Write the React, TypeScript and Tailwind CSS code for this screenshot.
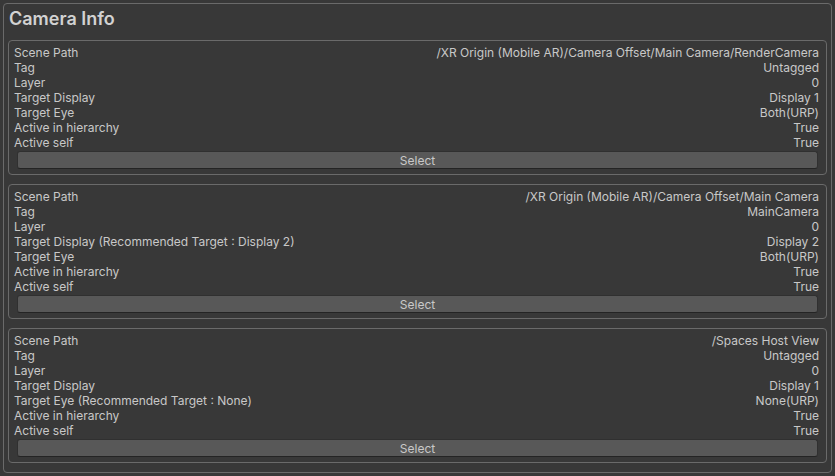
import React from "react";

type Row = [string, string];

const cameras: Row[][] = [
  [
    ["Scene Path", "/XR Origin (Mobile AR)/Camera Offset/Main Camera/RenderCamera"],
    ["Tag", "Untagged"],
    ["Layer", "0"],
    ["Target Display", "Display 1"],
    ["Target Eye", "Both(URP)"],
    ["Active in hierarchy", "True"],
    ["Active self", "True"],
  ],
  [
    ["Scene Path", "/XR Origin (Mobile AR)/Camera Offset/Main Camera"],
    ["Tag", "MainCamera"],
    ["Layer", "0"],
    ["Target Display (Recommended Target : Display 2)", "Display 2"],
    ["Target Eye", "Both(URP)"],
    ["Active in hierarchy", "True"],
    ["Active self", "True"],
  ],
  [
    ["Scene Path", "/Spaces Host View"],
    ["Tag", "Untagged"],
    ["Layer", "0"],
    ["Target Display", "Display 1"],
    ["Target Eye (Recommended Target : None)", "None(URP)"],
    ["Active in hierarchy", "True"],
    ["Active self", "True"],
  ],
];

function CameraCard({ rows }: { rows: Row[] }) {
  return (
    <div className="h-[135px] border border-[#6a6a6a] rounded-[4px] pl-[5px] pr-[7px] pt-[4px]">
      {rows.map(([label, value]) => (
        <div key={label} className="flex justify-between h-[15px] leading-[15px] text-[12px] text-[#c8c8c8]">
          <span>{label}</span>
          <span>{value}</span>
        </div>
      ))}
      <button className="block mt-[1px] ml-[3px] mr-[1px] w-[calc(100%-4px)] h-[18px] rounded-[3px] bg-[#585858] border border-[#303030] border-b-[#242424] text-[12px] leading-[15px] text-[#c8c8c8]">
        Select
      </button>
    </div>
  );
}

export default function App() {
  return (
    <div className="w-[835px] h-[476px] bg-[#383838] p-[3px] font-['Inter',sans-serif]">
      <div className="h-[470px] border border-[#6a6a6a] rounded-[4px] px-[4px]">
        <h1 className="mt-[3px] mb-[9px] pl-[1px] h-[24px] leading-[24px] text-[18px] font-semibold text-[#d2d2d2]">
          Camera Info
        </h1>
        <div className="flex flex-col gap-[9px]">
          {cameras.map((rows, i) => (
            <CameraCard key={i} rows={rows} />
          ))}
        </div>
      </div>
    </div>
  );
}
